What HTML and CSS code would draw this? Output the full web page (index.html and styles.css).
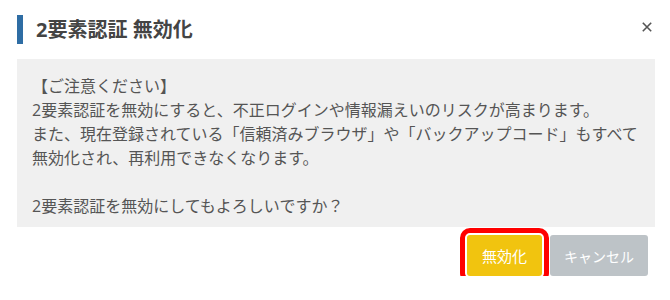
FILE: index.html
```html
<!DOCTYPE html>
<html lang="ja">
<head>
<meta charset="utf-8">
<title>2要素認証 無効化</title>
<link rel="stylesheet" href="styles.css">
</head>
<body>
<div class="dialog">
  <div class="header">
    <h1 class="title">2要素認証 無効化</h1>
    <button class="close" type="button" aria-label="閉じる">
      <svg width="10" height="10" viewBox="0 0 10 10"><path d="M0.8 0.8 L9.2 9.2 M9.2 0.8 L0.8 9.2" stroke="#555" stroke-width="1.6" fill="none"/></svg>
    </button>
  </div>
  <div class="notice">
    <p>【ご注意ください】<br>2要素認証を無効にすると、不正ログインや情報漏えいのリスクが高まります。<br>また、現在登録されている「信頼済みブラウザ」や「バックアップコード」もすべて<br>無効化され、再利用できなくなります。<br><br>2要素認証を無効にしてもよろしいですか？</p>
  </div>
  <div class="actions">
    <button class="btn btn-yes" type="button">無効化</button>
    <button class="btn btn-cancel" type="button">キャンセル</button>
  </div>
</div>
</body>
</html>
```

FILE: styles.css
```css
html, body {
  margin: 0;
  padding: 0;
  background: #ffffff;
}

body {
  font-family: "Open Sans", "Noto Sans CJK JP", sans-serif;
  text-spacing-trim: space-all;
}

.dialog {
  padding: 15px 15px 0 17px;
}

.header {
  display: flex;
  align-items: center;
  justify-content: space-between;
  height: 29px;
  border-left: 6px solid #2e6da4;
  padding-left: 13px;
}

.title {
  margin: 0;
  font-size: 20px;
  font-weight: 700;
  color: #444444;
  line-height: 29px;
}

.close {
  border: 0;
  background: none;
  padding: 0;
  margin: 0 3px 5px 0;
  width: 10px;
  height: 10px;
  display: flex;
  cursor: pointer;
}

.notice {
  margin-top: 15px;
  background: #f0f0f0;
  padding: 15px 15px 9px 15px;
}

.notice p {
  margin: 0;
  font-size: 16px;
  line-height: 24px;
  color: #555555;
  white-space: nowrap;
  text-spacing-trim: space-all;
}

.actions {
  display: flex;
  justify-content: flex-end;
  gap: 8px;
  margin-top: 8px;
  padding-right: 7px;
}

.btn {
  height: 41px;
  border: 0;
  border-radius: 3px;
  color: #ffffff;
  font-family: "Open Sans", "Noto Sans CJK JP", sans-serif;
  font-size: 14px;
  padding: 0;
  text-align: center;
  cursor: pointer;
}

.btn-yes {
  width: 75px;
  background: #f1c40f;
  outline: 5px solid #ff0000;
  outline-offset: 2px;
  font-size: 15px;
}

.btn-cancel {
  width: 98px;
  background: #bdc3c7;
}
```
